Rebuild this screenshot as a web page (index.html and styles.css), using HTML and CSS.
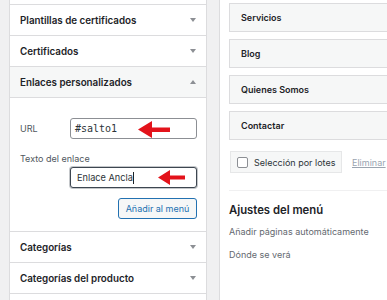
FILE: index.html
```html
<!DOCTYPE html>
<html lang="es">
<head>
    <meta charset="UTF-8">
    <title>Menús</title>
    <link rel="stylesheet" href="styles.css">
</head>
<body>
<div class="screen">
  <div class="sidebar">
    <div class="accordion">
      <div class="section-prev"></div>

      <h3 class="section-title">Plantillas de certificados <span class="toggle"></span></h3>
      <h3 class="section-title">Certificados <span class="toggle"></span></h3>

      <div class="section open">
        <h3 class="section-title">Enlaces personalizados <span class="toggle up"></span></h3>
        <div class="section-body">
          <div class="field-row">
            <span class="field-label">URL</span>
            <div class="text-input code">#salto1
              <svg class="pointer pointer-url" width="34" height="17" viewBox="0 0 34 17">
                <polygon points="0,8.5 14,0 14,6.5 32,6.5 32,11 14,11 14,17" fill="#e3131b"/>
              </svg>
            </div>
          </div>
          <div class="field-label block">Texto del enlace</div>
          <div class="text-input focus">Enlace Ancla<span class="caret"></span>
            <svg class="pointer pointer-text" width="28" height="15" viewBox="0 0 28 15">
              <polygon points="0,7.5 12,0 12,5.5 27,5.5 27,9.5 12,9.5 12,15" fill="#e3131b"/>
            </svg>
          </div>
          <div class="actions">
            <button class="button">Añadir al menú</button>
          </div>
        </div>
      </div>

      <h3 class="section-title">Categorías <span class="toggle"></span></h3>
      <h3 class="section-title">Categorías del producto <span class="toggle"></span></h3>
    </div>
  </div>

  <div class="menu-area">
    <ul class="menu-items">
      <li class="menu-item">Servicios</li>
      <li class="menu-item">Blog</li>
      <li class="menu-item">Quienes Somos</li>
      <li class="menu-item">Contactar</li>
    </ul>

    <div class="bulk">
      <label class="bulk-box"><span class="checkbox"></span>Selección por lotes</label>
      <a class="bulk-remove">Eliminar</a>
    </div>

    <div class="settings">
      <h3 class="settings-title">Ajustes del menú</h3>
      <p class="settings-row">Añadir páginas automáticamente</p>
      <p class="settings-row second">Dónde se verá</p>
    </div>
  </div>
</div>
</body>
</html>
```

FILE: styles.css
```css
  body {
    margin: 0;
    background: #f0f0f1;
    font-family: Inter, "Noto Sans", sans-serif;
    font-size: 10px;
    color: #1d2327;
    overflow: hidden;
  }

  .screen {
    display: flex;
    height: 300px;
  }

  /* left column */

  .sidebar {
    flex: none;
    width: 198px;
    margin-left: 9px;
  }

  .accordion {
    box-sizing: border-box;
    height: 300px;
    background: #fff;
    border-left: 1px solid #dcdcde;
    border-right: 1px solid #dcdcde;
  }

  .section-prev {
    height: 4px;
    border-bottom: 1px solid #dcdcde;
  }

  .section-title {
    margin: 0;
    height: 30px;
    padding: 0 10px;
    display: flex;
    align-items: center;
    justify-content: space-between;
    font-size: 9.8px;
    font-weight: 600;
    border-bottom: 1px solid #dcdcde;
  }

  .open .section-title {
    background: #f6f7f7;
  }

  .toggle {
    width: 0;
    height: 0;
    border-left: 3px solid transparent;
    border-right: 3px solid transparent;
    border-top: 4px solid #8c8f94;
  }

  .toggle.up {
    border-top: 0;
    border-bottom: 4px solid #8c8f94;
  }

  .section-body {
    padding: 20px 9px 12px 10px;
    border-bottom: 1px solid #dcdcde;
  }

  .field-row {
    display: flex;
    align-items: center;
  }

  .field-label {
    width: 50px;
    font-size: 9px;
    color: #50575e;
  }

  .field-label.block {
    width: auto;
    margin-top: 13px;
    line-height: 14px;
  }

  .text-input {
    position: relative;
    box-sizing: border-box;
    width: 127px;
    height: 21px;
    padding: 0 5px;
    display: flex;
    align-items: center;
    border: 1px solid #8c8f94;
    border-radius: 3px;
    background: #fff;
    font-size: 9.2px;
    color: #2c3338;
  }

  .text-input.code {
    padding-left: 4px;
    font-family: "DejaVu Sans Mono", "Liberation Mono", monospace;
    font-size: 10px;
  }

  .text-input.focus {
    margin: 1px 0 0 50px;
    padding-left: 6px;
    border-color: #3d4650;
    box-shadow: 0 0 0 1px rgba(61, 70, 80, 0.3);
  }

  .caret {
    width: 1px;
    height: 12px;
    background: #1d2327;
  }

  .pointer {
    position: absolute;
    display: block;
  }

  .pointer-url {
    left: 67px;
    top: 2px;
  }

  .pointer-text {
    left: 87px;
    top: 2px;
  }

  .actions {
    display: flex;
    justify-content: flex-end;
    margin-top: 10px;
  }

  .button {
    height: 21px;
    width: 79px;
    padding: 0;
    font-family: inherit;
    font-size: 9px;
    color: #2271b1;
    background: #f6f7f7;
    border: 1px solid #2271b1;
    border-radius: 3px;
  }

  /* right column */

  .menu-area {
    flex: 1;
    margin-left: 12px;
    padding: 3px 0 0 9px;
    background: #fff;
    border-left: 1px solid #dcdcde;
    overflow: hidden;
  }

  .menu-items {
    list-style: none;
    margin: 0;
    padding: 0;
  }

  .menu-item {
    box-sizing: border-box;
    width: 220px;
    height: 29px;
    margin-bottom: 7px;
    padding-left: 11px;
    display: flex;
    align-items: center;
    font-size: 9px;
    font-weight: 600;
    background: #f6f7f7;
    border: 1px solid #dcdcde;
  }

  .bulk {
    display: flex;
    align-items: center;
    margin-top: 11px;
    white-space: nowrap;
    font-size: 9px;
  }

  .bulk-box {
    box-sizing: border-box;
    width: 112px;
    height: 22px;
    margin-left: 1px;
    padding-left: 6px;
    display: flex;
    align-items: center;
    gap: 6px;
    color: #2c3338;
    background: #f6f7f7;
    border: 1px solid #e6e7e8;
  }

  .checkbox {
    box-sizing: border-box;
    width: 11px;
    height: 11px;
    background: #fff;
    border: 1px solid #8c8f94;
    border-radius: 2px;
  }

  .bulk-remove {
    margin-left: 10px;
    color: #9aa4b0;
    text-decoration: underline;
  }

  .settings {
    margin-top: 17px;
    border-top: 1px solid #f0f0f1;
  }

  .settings-title {
    margin: 11px 0 0;
    line-height: 16px;
    font-size: 11.3px;
    font-weight: 600;
  }

  .settings-row {
    margin: 7px 0 0;
    line-height: 14px;
    font-size: 9px;
    color: #646970;
  }

  .settings-row.second {
    margin-top: 9px;
  }
```
